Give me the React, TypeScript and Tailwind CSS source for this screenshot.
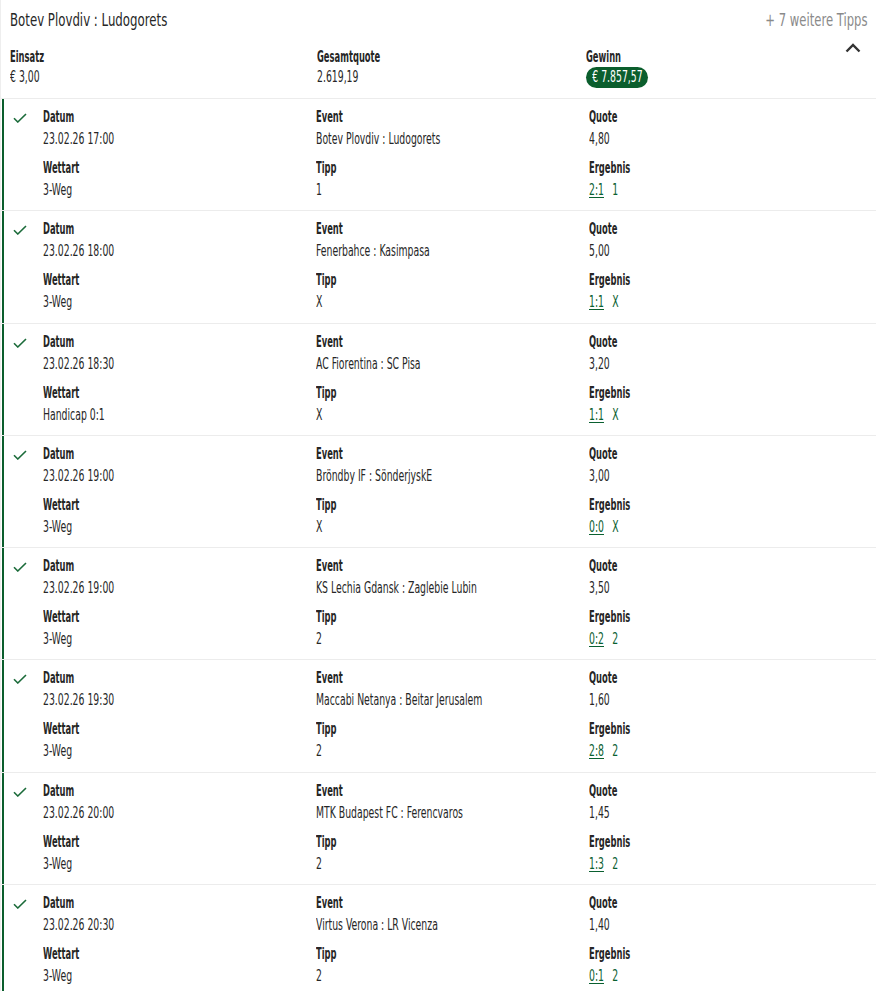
const bets = [
  { date: "23.02.26 17:00", event: "Botev Plovdiv : Ludogorets", quote: "4,80", type: "3-Weg", tip: "1", score: "2:1" },
  { date: "23.02.26 18:00", event: "Fenerbahce : Kasimpasa", quote: "5,00", type: "3-Weg", tip: "X", score: "1:1" },
  { date: "23.02.26 18:30", event: "AC Fiorentina : SC Pisa", quote: "3,20", type: "Handicap 0:1", tip: "X", score: "1:1" },
  { date: "23.02.26 19:00", event: "Bröndby IF : SönderjyskE", quote: "3,00", type: "3-Weg", tip: "X", score: "0:0" },
  { date: "23.02.26 19:00", event: "KS Lechia Gdansk : Zaglebie Lubin", quote: "3,50", type: "3-Weg", tip: "2", score: "0:2" },
  { date: "23.02.26 19:30", event: "Maccabi Netanya : Beitar Jerusalem", quote: "1,60", type: "3-Weg", tip: "2", score: "2:8" },
  { date: "23.02.26 20:00", event: "MTK Budapest FC : Ferencvaros", quote: "1,45", type: "3-Weg", tip: "2", score: "1:3" },
  { date: "23.02.26 20:30", event: "Virtus Verona : LR Vicenza", quote: "1,40", type: "3-Weg", tip: "2", score: "0:1" },
];

// the source font is much narrower than anything installed, so squeeze it
function Narrow({ children }: { children: React.ReactNode }) {
  return <span className="inline-block origin-left scale-x-[0.69] whitespace-nowrap">{children}</span>;
}

function NarrowBold({ children }: { children: React.ReactNode }) {
  return <span className="inline-block origin-left scale-x-[0.62] whitespace-nowrap font-bold">{children}</span>;
}

function Check() {
  return (
    <svg width="14" height="10" viewBox="0 0 14 10" fill="none" className="mt-[14px]">
      <path d="M1 5.2 L4.8 9 L13 1" stroke="#1b6b3a" strokeWidth="1.6" />
    </svg>
  );
}

function Field({ label, children }: { label: string; children: React.ReactNode }) {
  return (
    <div>
      <div className="leading-[22px]">
        <NarrowBold>{label}</NarrowBold>
      </div>
      <div className="leading-[22px]">
        <Narrow>{children}</Narrow>
      </div>
    </div>
  );
}

function BetRow({ bet }: { bet: (typeof bets)[number] }) {
  return (
    <div className="flex border-t border-[#ececec]">
      <div className="ml-px w-[2px] bg-[#0b5e2d]" />
      <div className="w-[39px] pl-[9px]">
        <Check />
      </div>
      <div className="grid flex-1 grid-cols-[273px_273px_1fr] gap-y-[7px] pt-[7px] pb-[9.3px]">
        <Field label="Datum">{bet.date}</Field>
        <Field label="Event">{bet.event}</Field>
        <Field label="Quote">{bet.quote}</Field>
        <Field label="Wettart">{bet.type}</Field>
        <Field label="Tipp">{bet.tip}</Field>
        <Field label="Ergebnis">
          <span className="text-[#0a6030]">
            <span className="underline underline-offset-2">{bet.score}</span>
            <span className="ml-[12px]">{bet.tip}</span>
          </span>
        </Field>
      </div>
    </div>
  );
}

export default function App() {
  return (
    <div className="h-[991px] w-[876px] overflow-hidden border-l border-[#eee] bg-white font-['DejaVu_Sans_Condensed',Roboto,sans-serif] text-[15px] text-[#262626]">
      <div className="px-[9px] pt-[8px] pb-[10px]">
        <div className="flex items-center justify-between text-[17px] leading-[24px]">
          <span className="inline-block origin-left scale-x-[0.77] whitespace-nowrap">Botev Plovdiv : Ludogorets</span>
          <span className="inline-block origin-right scale-x-[0.76] whitespace-nowrap text-[#8a8a8a]">+ 7 weitere Tipps</span>
        </div>
        <div className="mt-[15px] flex">
          <div className="grid flex-1 grid-cols-[307px_269px_1fr]">
            <div>
              <div className="leading-[20px]"><NarrowBold>Einsatz</NarrowBold></div>
              <div className="leading-[20px]"><Narrow>€ 3,00</Narrow></div>
            </div>
            <div>
              <div className="leading-[20px]"><NarrowBold>Gesamtquote</NarrowBold></div>
              <div className="leading-[20px]"><Narrow>2.619,19</Narrow></div>
            </div>
            <div>
              <div className="leading-[20px]"><NarrowBold>Gewinn</NarrowBold></div>
              <div className="flex h-[21px] w-[62px] items-center justify-center rounded-full bg-[#0b5e2d] text-white">
                <span className="inline-block scale-x-[0.69] whitespace-nowrap">€ 7.857,57</span>
              </div>
            </div>
          </div>
          <svg width="16" height="10" viewBox="0 0 16 10" fill="none" className="mr-[6px] -mt-[4px]">
            <path d="M1.5 8.5 L8 2 L14.5 8.5" stroke="#333" strokeWidth="2.4" />
          </svg>
        </div>
      </div>
      {bets.map((bet, i) => (
        <BetRow key={i} bet={bet} />
      ))}
    </div>
  );
}
